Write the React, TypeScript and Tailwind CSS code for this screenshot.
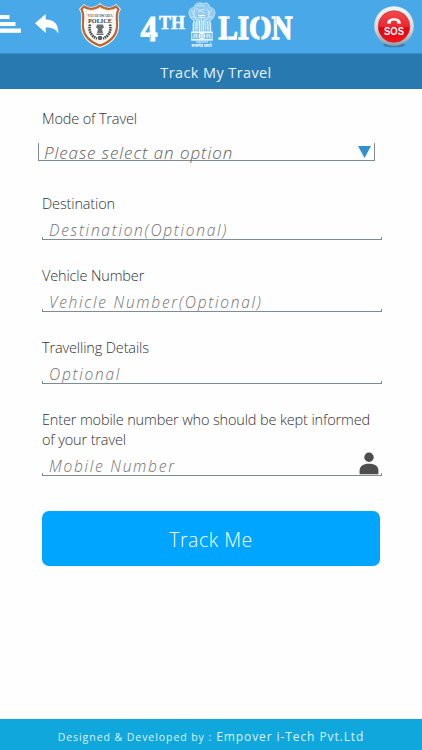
import React from 'react';

const MenuIcon = () => (
  <svg width="21" height="18" viewBox="0 0 21 18" fill="#fff">
    <rect x="0" y="0" width="9.5" height="4" />
    <rect x="0" y="7" width="15.5" height="4" />
    <rect x="0" y="13.5" width="21" height="4.3" />
  </svg>
);

const BackIcon = () => (
  <svg width="24" height="20" viewBox="0 0 24 20" fill="#fff">
    <path d="M0 9.2 10.7 0v5.500c8.400.2 13.100 4.600 12.600 14.100-2.200-4.300-5.600-6.400-12.600-6.200v5.700z" />
  </svg>
);

const PoliceBadge = () => (
  <svg width="44" height="47" viewBox="0 0 44 47">
    <path d="M22 1c3 3 6 4 9 4 3 0 5-1 7-3l5 5c-2 3-3 7-2 13 1 11-4 21-19 26C7 41 2 31 3 20c1-6 0-10-2-13l5-5c2 2 4 3 7 3 3 0 6-1 9-4z" fill="#fff" />
    <path d="M22 3.600c3 2.600 6 3.200 9 3.200 2.600 0 5-.8 7-2.300l2.600 2.800c-1.600 3-2.400 7-1.600 12.700 1 10-4 19-17 23.600C9 39 4 30 5 20c.8-5.700 0-9.700-1.600-12.700L6 4.500c2 1.500 4.400 2.300 7 2.300 3 0 6-.6 9-3.200z" fill="#fff" stroke="#bd6430" strokeWidth="2.200" />
    <path d="M13 8.500c4 0 6-.8 9-3 3 2.200 5 3 9 3l5-1c-1 4-1.200 8-.8 12 .8 9-4 17-13.200 21C12.800 36.500 8 28.500 8.800 19.500 9.200 15.500 9 11.500 8 7.500z" fill="#fff" stroke="#ecc9b3" strokeWidth=".6" />
    <text x="22" y="14.800" textAnchor="middle" textLength="25" lengthAdjust="spacingAndGlyphs" fontFamily="Liberation Serif, serif" fontWeight="bold" fontSize="4.300" fill="#55585c">VIJAYAWADA</text>
    <text x="22" y="20.500" textAnchor="middle" textLength="24" lengthAdjust="spacingAndGlyphs" fontFamily="Liberation Serif, serif" fontWeight="bold" fontSize="6.600" fill="#343a40">POLICE</text>
    <g fill="none" stroke="#3d444a" strokeWidth="2.600" strokeDasharray="1.600 .7">
      <path d="M12 22.500c-1.500 6 1 11.500 7 14" />
      <path d="M32 22.500c1.500 6-1 11.500-7 14" />
    </g>
    <path d="M19 22.500h6l1 3-2 1.500 1 4h-6l1-4-2-1.500zM18.500 31.500h7v1.500h-7z" fill="#6b7075" />
    <circle cx="22" cy="36" r="2.300" fill="#59606a" />
  </svg>
);

const StateEmblem = () => (
  <g fill="none" stroke="#fff" strokeWidth=".7" strokeOpacity=".85" transform="translate(4.3 .8) scale(.94 .98)">
    <path d="M66 3c-4-2-9-1-10 4-4 0-6 3-5 7 1 4 3 5 5 6l-1 12h19l-1-12c3-1 4-3 5-6 1-4-1-7-5-7-1-4-3-6-7-4z" fill="#fff" fillOpacity=".4" />
    <path d="M59 6c2-2 6-2 8 0M58 9c2-2 3 0 4 1 2-1 4-2 6-1M60 12c2-2 5-2 7 0M61 14c1 2 3 2 5 0M57 8c-2 4-1 9 2 11M70 8c3 4 2 9-1 11M53 10c2 0 3 2 2 4M75 10c-2 0-3 2-2 4M53 17c2-1 4-1 5 1M76 17c-2-1-4-1-5 1M60 18c1 4 0 7-1 11M64 18v12M68 18c-1 4 0 7 1 11" />
    <path d="M56 21c-2 3 0 6-1 9M59 21c-2 4 0 6-1 9M62 20v11M66 20v11M70 21c2 4 0 6 1 9M73 21c2 3 0 6 1 9M61 15h7M61 17h7" strokeWidth="1" />
    <path d="M53 32h23M53 40h23" strokeWidth="1.300" />
    <rect x="53.500" y="32.500" width="22" height="7" fill="#fff" fillOpacity=".3" />
    <circle cx="64.500" cy="36" r="2.800" strokeWidth="1.100" />
    <path d="M62 36h5M64.500 33.500v5M56 38c0-3 1-4 3-3v3M70 38v-3c2-1 3 0 3 3M58 42h13" strokeWidth="1.100" />
  </g>
);

const BrandLogo = () => (
  <svg width="176" height="52" viewBox="0 0 176 52" fontFamily="Liberation Serif, serif" fontWeight="bold" fill="#fff">
    <g stroke="#fff">
      <text x="3.500" y="40.500" fontSize="35" strokeWidth="1" textLength="17" lengthAdjust="spacingAndGlyphs">4</text>
      <text x="22" y="28.500" fontSize="18" strokeWidth=".5" textLength="26" lengthAdjust="spacingAndGlyphs">TH</text>
      <text x="81.500" y="38.500" fontSize="33.500" strokeWidth="1.300" textLength="74" lengthAdjust="spacingAndGlyphs">LION</text>
    </g>
    {/* stencil cuts */}
    <path d="M123.500 14v6.500M123.500 34v6" stroke="#49a9e8" strokeWidth="1.600" />
    <path d="M13.500 34.500v7M90.800 15v25M139 15v9" stroke="#49a9e8" strokeWidth=".8" opacity=".6" />
    <StateEmblem />
    <text x="54.500" y="47" fontSize="4.500" fontFamily="Noto Sans, sans-serif" textLength="20" lengthAdjust="spacingAndGlyphs">सत्यमेव जयते</text>
  </svg>
);

const SosButton = () => (
  <svg width="42" height="43" viewBox="0 0 42 43">
    <defs>
      <linearGradient id="ring" x1="0" y1="0" x2="0" y2="1">
        <stop offset="0" stopColor="#f4f6f8" />
        <stop offset=".6" stopColor="#d2d6da" />
        <stop offset="1" stopColor="#969ca2" />
      </linearGradient>
      <linearGradient id="red" x1="0" y1="0" x2="0" y2="1">
        <stop offset="0" stopColor="#f4484c" />
        <stop offset=".5" stopColor="#ee2730" />
        <stop offset=".54" stopColor="#e0040c" />
        <stop offset="1" stopColor="#f5151c" />
      </linearGradient>
    </defs>
    <ellipse cx="21" cy="39" rx="11" ry="2.300" fill="#2e6287" opacity=".6" />
    <circle cx="21" cy="20" r="19.800" fill="url(#ring)" />
    <circle cx="21" cy="20.500" r="15.800" fill="url(#red)" stroke="#b9292f" strokeWidth=".6" />
    <path d="M14.200 17.700c-1-7.200 14.600-7.200 13.600 0l-3.600-.3-.5-2.400c-2-.7-3.400-.7-5.400 0l-.5 2.400z" fill="#fff" />
    <text x="21" y="28.800" textAnchor="middle" textLength="20" lengthAdjust="spacingAndGlyphs" fontFamily="Liberation Sans, sans-serif" fontWeight="bold" fontSize="10.500" fill="#fff">SOS</text>
  </svg>
);

const PersonIcon = () => (
  <svg width="20" height="23" viewBox="0 0 20 23" fill="#4d4d4d">
    <circle cx="10" cy="5.300" r="4.700" />
    <path d="M.6 22.300v-3.800c0-4 3.500-6.700 9.400-6.700s9.400 2.700 9.400 6.700v3.800z" />
  </svg>
);

interface FieldProps {
  label: React.ReactNode;
  placeholder: string;
  icon?: React.ReactNode;
}

const Field = ({ label, placeholder, icon }: FieldProps) => (
  <div>
    <div className="text-[14.500px] leading-[19.500px] tracking-[-0.140px] font-light text-[#333] whitespace-nowrap">{label}</div>
    <div className="h-[26.500px] flex flex-col justify-end">
      <div className="h-[23px] flex items-center justify-between pl-[7px] pr-[3px]">
        <span className="pt-[7px] text-[15.500px] leading-[20px] italic font-light text-[#707070] whitespace-nowrap tracking-[1.750px]">{placeholder}</span>
        {icon}
      </div>
      <div className="h-[3px] -mt-px border-x border-b border-[#7d8d97]" />
    </div>
  </div>
);

export default function App() {
  return (
    <div className="w-[422px] h-[750px] bg-[#fefefe] flex flex-col overflow-hidden font-['Open_Sans','Noto_Sans',sans-serif]">
      <header className="h-[53px] bg-[#49a9e8] flex items-start shrink-0">
        <div className="mt-[15px]"><MenuIcon /></div>
        <div className="mt-[14px] ml-[14px]"><BackIcon /></div>
        <div className="mt-[2px] ml-[19px]"><PoliceBadge /></div>
        <div className="ml-[15px]"><BrandLogo /></div>
        <div className="mt-[6px] ml-[60px]"><SosButton /></div>
      </header>
      <div className="h-[36px] bg-[#2979b1] border-t border-[#3b8bc5] shrink-0 flex items-center justify-center pt-[2px] pl-[10px] text-[14.500px] text-[#e5f3fb] tracking-[0.400px]">
        Track My Travel
      </div>

      <main className="flex-1 pt-[19px] pl-[42px] pr-[40px]">
        <div className="pt-px text-[14.500px] leading-[19px] tracking-[-0.140px] font-light text-[#333] whitespace-nowrap">Mode of Travel</div>
        <div className="mt-[15px] -ml-[4px] w-[337px] h-[18px] border-x border-b border-[#7d8d97] flex items-center justify-between pl-[5px] pr-[3px]">
          <span className="pt-[2px] text-[17px] leading-[18px] italic font-light text-[#606060] whitespace-nowrap tracking-[0.930px]">Please select an option</span>
          <svg width="13" height="12" viewBox="0 0 13 12"><path d="M0 0h13L6.500 12z" fill="#3390cf" /></svg>
        </div>

        <div className="mt-[32.500px] flex flex-col gap-[26.300px]">
          <Field label="Destination" placeholder="Destination(Optional)" />
          <Field label="Vehicle Number" placeholder="Vehicle Number(Optional)" />
          <Field label="Travelling Details" placeholder="Optional" />
          <Field
            label={<>Enter mobile number who should be kept informed<br />of your travel</>}
            placeholder="Mobile Number"
            icon={<div className="pt-[2px]"><PersonIcon /></div>}
          />
        </div>

        <button className="mt-[35px] w-[338px] h-[55px] rounded-[7px] bg-[#00a5ff] text-white text-[19.500px] font-light tracking-[0.500px] flex items-center justify-center pt-[2px]">
          Track Me
        </button>
      </main>

      <footer className="h-[31px] shrink-0 bg-[#10a7dc] text-[#d9f3fc] flex items-baseline justify-center pt-[9px] whitespace-nowrap leading-[18px]">
        <span className="text-[10.500px] tracking-[0.940px] mr-[4px]">Designed &amp; Developed by :</span>
        <span className="text-[12px] tracking-[0.910px]">Empover i-Tech Pvt.Ltd</span>
      </footer>
    </div>
  );
}
